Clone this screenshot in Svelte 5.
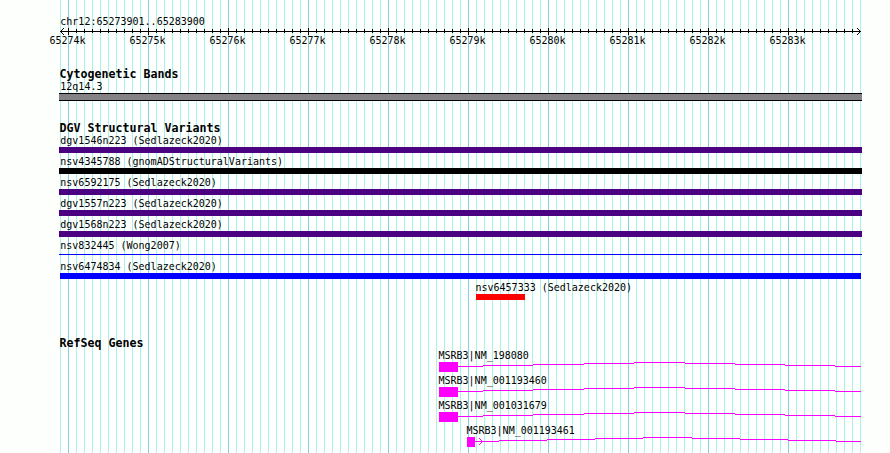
<script>
const ticks = ['65274k', '65275k', '65276k', '65277k', '65278k', '65279k', '65280k', '65281k', '65282k', '65283k']
const minorTicks = Array.from({ length: 100 }, (_, i) => 9 + i * 8).filter((x) => x < 801)

const variants = [
  { name: 'dgv1546n223 (Sedlazeck2020)', kind: 'complex' },
  { name: 'nsv4345788 (gnomADStructuralVariants)', kind: 'other' },
  { name: 'nsv6592175 (Sedlazeck2020)', kind: 'complex' },
  { name: 'dgv1557n223 (Sedlazeck2020)', kind: 'complex' },
  { name: 'dgv1568n223 (Sedlazeck2020)', kind: 'complex' },
  { name: 'nsv832445 (Wong2007)', kind: 'thin' },
  { name: 'nsv6474834 (Sedlazeck2020)', kind: 'gain' },
  { name: 'nsv6457333 (Sedlazeck2020)', kind: 'loss' },
]

// step positions of the intron line, relative to the left edge of the tracks
const longSteps = [399, 424, 474, 525, 575, 626, 676, 726, 776, 802]
const shortSteps = [416, 440, 488, 536, 584, 633, 681, 729, 777, 802]

const genes = [
  { name: 'MSRB3|NM_198080', x: 380, width: 19, steps: longSteps },
  { name: 'MSRB3|NM_001193460', x: 380, width: 19, steps: longSteps },
  { name: 'MSRB3|NM_001031679', x: 380, width: 19, steps: longSteps },
  { name: 'MSRB3|NM_001193461', x: 408, width: 8, steps: shortSteps, arrow: true },
]

const levels = [4, 3, 2, 1, 0, 1, 2, 3, 4]

function intron(steps) {
  return levels.map((y, i) => `M${steps[i]} ${y}h${steps[i + 1] - steps[i]}v1H${steps[i]}z`).join('')
}
</script>

<main class="browser">
  <div class="tracks">
    <section class="ruler">
      <div class="label">chr12:65273901..65283900</div>
      <svg class="axis" width="803" height="7" viewBox="0 0 803 7" shape-rendering="crispEdges">
        <rect x="1" y="3" width="801" height="1" />
        {#each minorTicks as x, i}
          {#if i % 10 === 0}
            <rect {x} y="0" width="1" height="7" />
          {:else}
            <rect {x} y="1" width="1" height="4" />
          {/if}
        {/each}
        <path d="M2 2h1v1H2zM3 1h1v1H3zM4 0h1v1H4zM2 4h1v1H2zM3 5h1v1H3zM4 6h1v1H4z" />
        <path d="M800 2h1v1h-1zM799 1h1v1h-1zM798 0h1v1h-1zM800 4h1v1h-1zM799 5h1v1h-1zM798 6h1v1h-1z" />
      </svg>
      <div class="ticks">
        {#each ticks as tick}
          <span class="tick">{tick}</span>
        {/each}
      </div>
    </section>

    <section class="cyto">
      <h2>Cytogenetic Bands</h2>
      <div class="label">12q14.3</div>
      <div class="band"></div>
    </section>

    <section class="variants">
      <h2>DGV Structural Variants</h2>
      {#each variants as v}
        <div class="row {v.kind}">
          <div class="label">{v.name}</div>
          <div class="bar"></div>
        </div>
      {/each}
    </section>

    <section class="genes">
      <h2>RefSeq Genes</h2>
      {#each genes as g}
        <div class="gene">
          <div class="label" style="padding-left: {g.x - 0.5}px">{g.name}</div>
          <svg width="803" height="10" viewBox="0 0 803 10" shape-rendering="crispEdges">
            <rect x={g.x} y="0" width={g.width} height="10" />
            <path d={intron(g.steps)} />
            {#if g.arrow}
              <path d="M420 1h1v1h-1zM421 2h1v1h-1zM422 3h1v1h-1zM423 4h1v1h-1zM422 5h1v1h-1zM421 6h1v1h-1zM420 7h1v1h-1z" />
            {/if}
          </svg>
        </div>
      {/each}
    </section>
  </div>
</main>

<style>
:global(body) { margin: 0; background: #fdfffc; }
.browser {
  box-sizing: border-box;
  width: 890px;
  height: 453px;
  padding: 0 29px 0 60px;
  overflow: hidden;
  color: #000;
  font: 10px/18px "DejaVu Sans Mono", monospace;
  background-image:
    linear-gradient(to right, #87ceeb 1px, transparent 1px),
    linear-gradient(to right, #afeeee 1px, transparent 1px);
  background-position: 8px 0, 0 0;
  background-size: 80px 100%, 8px 100%;
  background-origin: content-box;
  background-clip: content-box;
}
.tracks { width: 803px; margin-left: -1px; padding-top: 13px; }
svg { display: block; }
h2 { height: 12px; margin: 0; padding-left: 0.5px; font-size: 11.63px; line-height: 16px; font-weight: 700; white-space: pre; }
.label { height: 15px; padding-left: 1.3px; line-height: 18px; white-space: pre; transform: scaleY(1.1); transform-origin: 0 12px; }

.ruler { height: 53px; }
.ticks { display: flex; width: 800px; margin-left: -31.5px; }
.tick { width: 80px; line-height: 12px; text-align: center; transform: scaleY(1.1); transform-origin: 0 9px; }

.cyto { height: 54px; }
.band { box-sizing: border-box; height: 8px; background: #848284; border: solid #000; border-width: 1px 0; }

.variants { height: 215px; }
.row { height: 21px; }
.bar { height: 6px; }
.complex .bar { background: #4b0082; }
.other .bar { background: #000; }
.thin .bar { height: 1px; margin-top: 2px; background: #00f; }
.gain .bar { margin: 0 1px; background: #00f; }
.loss .label { padding-left: 416.5px; }
.loss .bar { width: 49px; margin-left: 417px; background: #f00; }

.gene { height: 25px; }
.gene svg { fill: #f0f; }
</style>
